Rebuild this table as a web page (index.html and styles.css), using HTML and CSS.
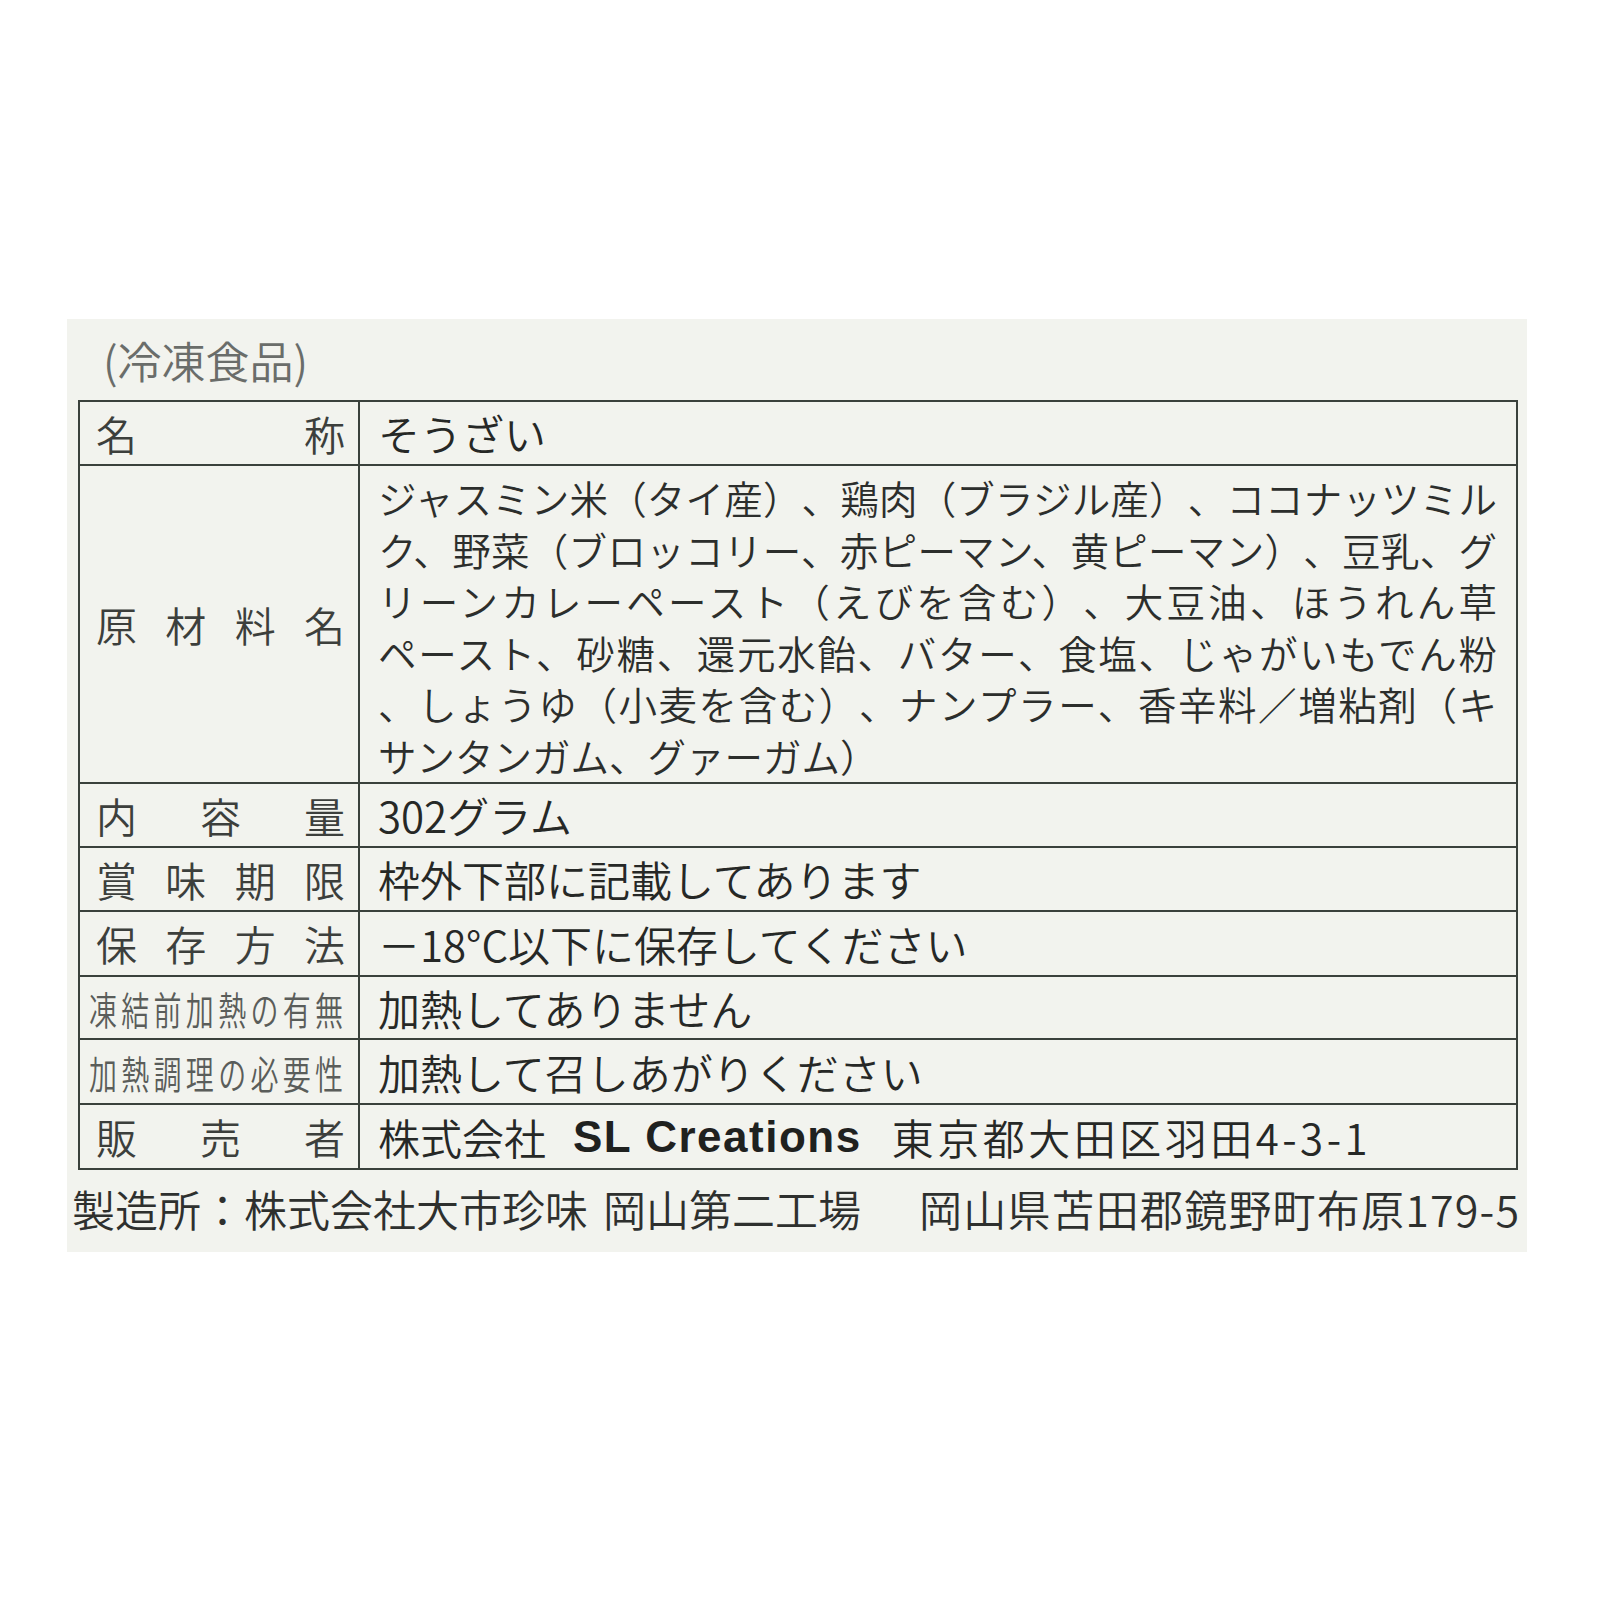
FILE: index.html
```html
<!DOCTYPE html>
<html lang="ja">
<head>
<meta charset="utf-8">
<title>食品表示</title>
<link rel="stylesheet" href="styles.css">
</head>
<body>
<div class="panel">
  <div class="caption">(冷凍食品)</div>
  <div class="table">
    <div class="row r-name">
      <div class="label"><span>名</span><span>称</span></div>
      <div class="value">そうざい</div>
    </div>
    <div class="row r-ing">
      <div class="label"><span>原</span><span>材</span><span>料</span><span>名</span></div>
      <div class="value ingredients">
        <span class="line">ジャスミン米（タイ産）、鶏肉（ブラジル産）、ココナッツミル</span>
        <span class="line">ク、野菜（ブロッコリー、赤ピーマン、黄ピーマン）、豆乳、グ</span>
        <span class="line">リーンカレーペースト（えびを含む）、大豆油、ほうれん草</span>
        <span class="line">ペースト、砂糖、還元水飴、バター、食塩、じゃがいもでん粉</span>
        <span class="line">、しょうゆ（小麦を含む）、ナンプラー、香辛料／増粘剤（キ</span>
        <span class="line last">サンタンガム、グァーガム）</span>
      </div>
    </div>
    <div class="row r3">
      <div class="label"><span>内</span><span>容</span><span>量</span></div>
      <div class="value">302グラム</div>
    </div>
    <div class="row r4">
      <div class="label"><span>賞</span><span>味</span><span>期</span><span>限</span></div>
      <div class="value">枠外下部に記載してあります</div>
    </div>
    <div class="row r5">
      <div class="label"><span>保</span><span>存</span><span>方</span><span>法</span></div>
      <div class="value">－18°C以下に保存してください</div>
    </div>
    <div class="row r6">
      <div class="label small"><span>凍</span><span>結</span><span>前</span><span>加</span><span>熱</span><span>の</span><span>有</span><span>無</span></div>
      <div class="value">加熱してありません</div>
    </div>
    <div class="row r7">
      <div class="label small"><span>加</span><span>熱</span><span>調</span><span>理</span><span>の</span><span>必</span><span>要</span><span>性</span></div>
      <div class="value">加熱して召しあがりください</div>
    </div>
    <div class="row r8">
      <div class="label"><span>販</span><span>売</span><span>者</span></div>
      <div class="value">株式会社<b class="latin">SL Creations</b><span class="addr">東京都大田区羽田4-3-1</span></div>
    </div>
  </div>
  <div class="footer">製造所：株式会社大市珍味<span class="gap1">岡山第二工場</span><span class="gap2">岡山県苫田郡鏡野町布原179-5</span></div>
</div>
</body>
</html>
```

FILE: styles.css
```css
* {
  box-sizing: border-box;
}

html, body {
  margin: 0;
  padding: 0;
  background: #ffffff;
}

body {
  font-family: "Noto Sans CJK JP", "Noto Sans", sans-serif;
  font-weight: 350;
  color: #2a2c2a;
  width: 1600px;
  height: 1600px;
  padding-top: 319px;
  padding-left: 67px;
  text-spacing-trim: space-all;
}

.panel {
  width: 1460px;
  height: 933px;
  background: #f2f3ee;
  padding-left: 11px;
  padding-top: 15px;
}

.caption {
  font-size: 44px;
  line-height: 52px;
  height: 52px;
  margin-left: 25px;
  color: #6a6d6a;
  margin-bottom: 14px;
}

.table {
  width: 1440px;
  border: 2px solid #3a413c;
}

.row {
  display: flex;
  border-top: 2px solid #3a413c;
}

.row:first-child {
  border-top: none;
}

.r-name { height: 62px; }
.r-ing  { height: 318px; }
.r3 { height: 64px; }
.r4 { height: 64px; }
.r5 { height: 65px; }
.r6 { height: 63px; }
.r7 { height: 65px; }
.r8 { height: 65px; }

.label {
  width: 278px;
  flex: none;
  display: flex;
  justify-content: space-between;
  align-items: center;
  padding: 0 13px 0 16px;
  font-size: 41px;
  line-height: 1;
  color: #3c3f3c;
}

.label.small {
  padding: 0 15px 0 9px;
  color: #5a5d5a;
}

.label.small span {
  display: inline-block;
  font-size: 28px;
  transform: scaleY(1.38);
}

.value {
  flex: 1;
  border-left: 2px solid #3a413c;
  padding-left: 18px;
  display: flex;
  align-items: center;
  font-size: 42px;
  line-height: 1;
  color: #262826;
  white-space: nowrap;
}

.ingredients {
  display: block;
  font-size: 38.5px;
  line-height: 51.5px;
  padding-top: 6px;
  padding-right: 19px;
  color: #2c2e2c;
}

.line {
  display: block;
  text-align: justify;
  text-align-last: justify;
  text-justify: inter-character;
}

.line.last {
  text-align: left;
  text-align-last: left;
}

.latin {
  font-family: "Liberation Sans", "Noto Sans", sans-serif;
  font-weight: 700;
  font-size: 44px;
  letter-spacing: 1.5px;
  margin: 0 30px 0 27px;
  color: #1f211f;
}

.addr {
  letter-spacing: 3.5px;
}

.footer {
  margin-top: 13px;
  margin-left: -6px;
  font-size: 43px;
  line-height: 50px;
  color: #2e302e;
  white-space: nowrap;
}

.gap1 {
  margin-left: 15px;
}

.gap2 {
  margin-left: 58px;
  letter-spacing: 1.2px;
}
```
